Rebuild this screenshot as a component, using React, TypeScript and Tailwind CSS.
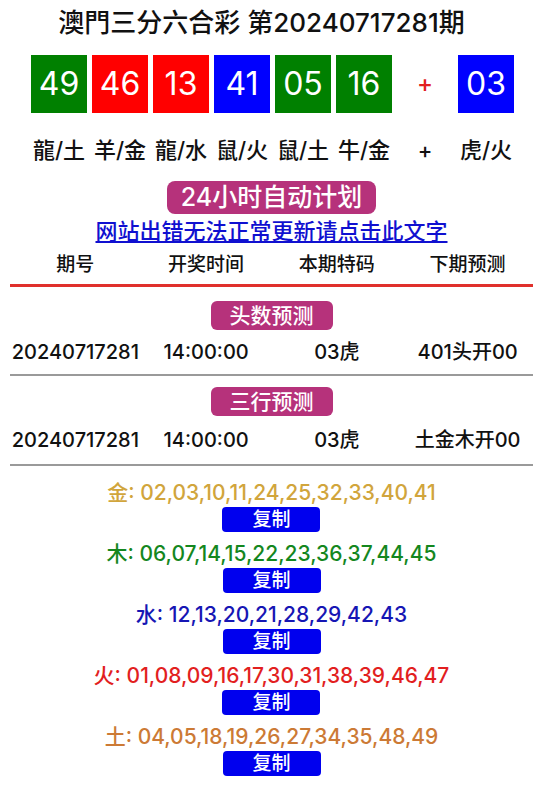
const font = { fontFamily: 'Inter, "Noto Sans CJK SC", "Noto Sans", sans-serif' }

const balls = [
  { n: '49', c: 'bg-[#008000]', z: '龍/土' },
  { n: '46', c: 'bg-[#ff0000]', z: '羊/金' },
  { n: '13', c: 'bg-[#ff0000]', z: '龍/水' },
  { n: '41', c: 'bg-[#0000ff]', z: '鼠/火' },
  { n: '05', c: 'bg-[#008000]', z: '鼠/土' },
  { n: '16', c: 'bg-[#008000]', z: '牛/金' },
]

const elements = [
  { k: '金', nums: '02,03,10,11,24,25,32,33,40,41', c: 'text-[#d1a53c]' },
  { k: '木', nums: '06,07,14,15,22,23,36,37,44,45', c: 'text-[#14871e]' },
  { k: '水', nums: '12,13,20,21,28,29,42,43', c: 'text-[#1616b4]' },
  { k: '火', nums: '01,08,09,16,17,30,31,38,39,46,47', c: 'text-[#e21f1f]' },
  { k: '土', nums: '04,05,18,19,26,27,34,35,48,49', c: 'text-[#cc7a35]' },
]

function Pill({ text, big }: { text: string; big?: boolean }) {
  return (
    <div className="flex justify-center">
      <div
        className={
          big
            ? 'h-[33px] w-[209px] rounded-[8px] bg-[#b6327b] text-white text-[25px] font-medium leading-[33px] text-center'
            : 'h-[29px] w-[122px] rounded-[6px] bg-[#b6327b] text-white text-[21px] font-medium leading-[29px] text-center'
        }
      >
        {text}
      </div>
    </div>
  )
}

function DataRow({ last, h }: { last: string; h: string }) {
  return (
    <div className={`grid grid-cols-4 ${h} items-center text-[20px] font-medium text-[#111] border-b-2 border-[#9a9a9a] mx-[10px]`}>
      <div className="text-center whitespace-nowrap">20240717281</div>
      <div className="text-center">14:00:00</div>
      <div className="text-center">03虎</div>
      <div className="text-center whitespace-nowrap">{last}</div>
    </div>
  )
}

export default function App() {
  return (
    <div className="w-[543px] min-h-[800px] bg-white" style={font}>
      <div className="pt-[5px] pr-[20px] h-[50px] text-center text-[26px] font-medium text-[#111] leading-[36px] whitespace-nowrap">
        澳門三分六合彩 第20240717281期
      </div>

      <div className="flex justify-center gap-[5px] mt-[5px] pl-[2px]">
        {balls.map((b) => (
          <div key={b.n} className={`w-[56px] h-[58px] ${b.c} text-white text-[32px] leading-[58px] text-center`}>
            {b.n}
          </div>
        ))}
        <div className="w-[56px] h-[58px] text-[#e21f1f] text-[24px] font-medium leading-[58px] text-center">+</div>
        <div className="w-[56px] h-[58px] bg-[#0000ff] text-white text-[32px] leading-[58px] text-center">03</div>
      </div>

      <div className="flex justify-center gap-[5px] mt-[22px] h-[36px] pl-[2px]">
        {balls.map((b) => (
          <div key={b.n} className="w-[56px] text-[22px] font-medium text-[#111] leading-[30px] text-center whitespace-nowrap">
            {b.z}
          </div>
        ))}
        <div className="w-[56px] text-[22px] font-medium text-[#111] leading-[30px] text-center">+</div>
        <div className="w-[56px] text-[22px] font-medium text-[#111] leading-[30px] text-center whitespace-nowrap">虎/火</div>
      </div>

      <div className="mt-[10px]">
        <Pill text="24小时自动计划" big />
      </div>

      <div className="mt-[2px] h-[30px] text-center text-[22px] font-medium leading-[30px]">
        <a href="#" className="text-[#1010d0] underline underline-offset-2">
          网站出错无法正常更新请点击此文字
        </a>
      </div>

      <div className="grid grid-cols-4 mx-[10px] h-[41px] items-center text-[19px] font-medium text-[#111] border-b-[3px] border-[#e0302c]">
        <div className="text-center">期号</div>
        <div className="text-center">开奖时间</div>
        <div className="text-center">本期特码</div>
        <div className="text-center">下期预测</div>
      </div>

      <div className="mt-[14px]">
        <Pill text="头数预测" />
      </div>
      <DataRow last="401头开00" h="h-[46px]" />

      <div className="mt-[11px]">
        <Pill text="三行预测" />
      </div>
      <DataRow last="土金木开00" h="h-[50px]" />

      <div className="mt-[13px] flex flex-col items-center gap-[8px]">
        {elements.map((e) => (
          <div key={e.k} className="flex flex-col items-center">
            <div className={`${e.c} text-[21px] font-medium leading-[28px] whitespace-nowrap`}>
              {e.k}: {e.nums}
            </div>
            <button className="w-[98px] h-[25px] rounded-[4px] bg-[#0000ee] text-white text-[19px] font-medium leading-[25px]">
              复制
            </button>
          </div>
        ))}
      </div>
    </div>
  )
}
